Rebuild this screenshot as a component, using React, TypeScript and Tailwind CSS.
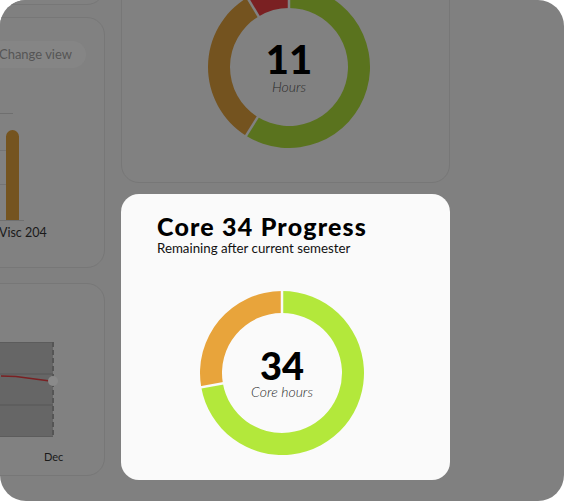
import React from 'react'

type Seg = { from: number; to: number; color: string }

const pt = (cx: number, cy: number, r: number, deg: number) => {
  const a = ((deg - 90) * Math.PI) / 180
  return [cx + r * Math.cos(a), cy + r * Math.sin(a)]
}

function sector(cx: number, cy: number, R: number, r: number, a0: number, a1: number) {
  const large = a1 - a0 > 180 ? 1 : 0
  const [x0, y0] = pt(cx, cy, R, a0)
  const [x1, y1] = pt(cx, cy, R, a1)
  const [x2, y2] = pt(cx, cy, r, a1)
  const [x3, y3] = pt(cx, cy, r, a0)
  return `M${x0} ${y0} A${R} ${R} 0 ${large} 1 ${x1} ${y1} L${x2} ${y2} A${r} ${r} 0 ${large} 0 ${x3} ${y3}Z`
}

function Donut({
  size,
  R,
  r,
  segs,
  gap,
  value,
  label,
  valueClass,
}: {
  size: number
  R: number
  r: number
  segs: Seg[]
  gap: string
  value: string
  label: string
  valueClass: string
}) {
  const c = size / 2
  return (
    <div className="relative shrink-0" style={{ width: size, height: size }}>
      <svg width={size} height={size} viewBox={`0 0 ${size} ${size}`} className="block">
        {segs.map((s, i) => (
          <path key={i} d={sector(c, c, R, r, s.from, s.to)} fill={s.color} />
        ))}
        {segs.map((s, i) => {
          const [xa, ya] = pt(c, c, r - 2, s.from)
          const [xb, yb] = pt(c, c, R + 2, s.from)
          return <line key={'l' + i} x1={xa} y1={ya} x2={xb} y2={yb} stroke={gap} strokeWidth={2.5} />
        })}
      </svg>
      <div className="absolute inset-0 flex flex-col items-center justify-center">
        <div className={valueClass}>{value}</div>
        <div className="text-[14px] leading-[16px] italic font-light text-[#2a2a2a]">{label}</div>
      </div>
    </div>
  )
}

const font = { fontFamily: 'Lato, "Open Sans", sans-serif' }

function BarChart() {
  return (
    <svg width="60" height="110" className="block ml-[140px] mt-[45px]">
      <line x1="0" y1="0.5" x2="32" y2="0.5" stroke="#6f6f6f" />
      <line x1="0" y1="37.5" x2="32" y2="37.5" stroke="#747474" />
      <line x1="0" y1="71.5" x2="32" y2="71.5" stroke="#747474" />
      <path d="M25 23.5 a6.5 6.5 0 0 1 13 0 V107 H25 Z" fill="#75541f" />
      <line x1="0" y1="107.5" x2="43" y2="107.5" stroke="#6f6f6f" />
    </svg>
  )
}

function LineChart() {
  return (
    <svg width="120" height="96" className="block ml-[100px] mt-[58px]">
      <rect x="0" y="0" width="112" height="95" fill="#666666" />
      <line x1="0" y1="32" x2="112" y2="32" stroke="#575757" />
      <line x1="0" y1="63" x2="112" y2="63" stroke="#575757" />
      <line x1="0" y1="0.5" x2="112" y2="0.5" stroke="#5c5c5c" />
      <line x1="0" y1="94.5" x2="112" y2="94.5" stroke="#5c5c5c" />
      <line x1="112" y1="0" x2="112" y2="96" stroke="#555555" strokeWidth="2" strokeDasharray="5 3" />
      <path d="M60 34 L75 34.5 L109 39" stroke="#7a2022" strokeWidth="1.5" fill="none" />
      <circle cx="112" cy="39" r="5" fill="#8a8a8a" />
    </svg>
  )
}

export default function App() {
  return (
    <div className="w-[565px] h-[503px] bg-white" style={font}>
      <div className="w-[564px] h-[501px] rounded-[26px] bg-[#808080] overflow-hidden flex gap-4">
        {/* left column, mostly off screen */}
        <div className="ml-[-160px] w-[265px] shrink-0 flex flex-col">
          <div className="h-[40px] mt-[-35px] rounded-[18px] bg-[#818181] border border-[#777777]" />
          <div className="mt-3 h-[251px] rounded-[18px] bg-[#818181] border border-[#777777] flex flex-col pt-[23px]">
            <div className="self-end mr-[18px] h-[27px] w-[146px] rounded-full bg-[#858585] flex items-center justify-end pr-[14px] text-[13px] text-[#555555]">
              Change view
            </div>
            <BarChart />
            <div className="ml-[158px] mt-[1px] text-[12.5px] text-[#1a1a1a] whitespace-nowrap">Visc 204</div>
          </div>
          <div className="mt-[15px] h-[193px] rounded-[18px] bg-[#818181] border border-[#777777] flex flex-col">
            <LineChart />
            <div className="ml-[203px] mt-[11px] text-[11px] text-[#1a1a1a]">Dec</div>
          </div>
        </div>

        {/* middle column */}
        <div className="w-[329px] shrink-0 flex flex-col">
          <div className="mt-[-20px] h-[203px] rounded-[18px] bg-[#818181] border border-[#777777] flex justify-center pt-[5px] pl-[7px]">
            <Donut
              size={162}
              R={81}
              r={59}
              gap="#818181"
              value="11"
              label="Hours"
              valueClass="text-[40px] leading-none font-black text-black"
              segs={[
                { from: 0, to: 212, color: '#5a731e' },
                { from: 212, to: 329, color: '#74531f' },
                { from: 329, to: 360, color: '#7a2022' },
              ]}
            />
          </div>
          <div className="mt-[11px] h-[286px] rounded-[18px] bg-[#fafafa] pl-[36px] pt-[18px] flex flex-col">
            <h2 className="text-[25px] leading-[28px] font-black text-black tracking-[1.2px]">Core 34 Progress</h2>
            <p className="text-[13.3px] leading-[16px] text-[#111111]">Remaining after current semester</p>
            <div className="mt-[35px] ml-[43px]">
              <Donut
                size={164}
                R={82}
                r={60}
                gap="#fafafa"
                value="34"
                label="Core hours"
                valueClass="text-[38px] leading-none font-black text-black"
                segs={[
                  { from: 0, to: 260, color: '#b3e83b' },
                  { from: 260, to: 360, color: '#e8a43b' },
                ]}
              />
            </div>
          </div>
        </div>
      </div>
    </div>
  )
}
